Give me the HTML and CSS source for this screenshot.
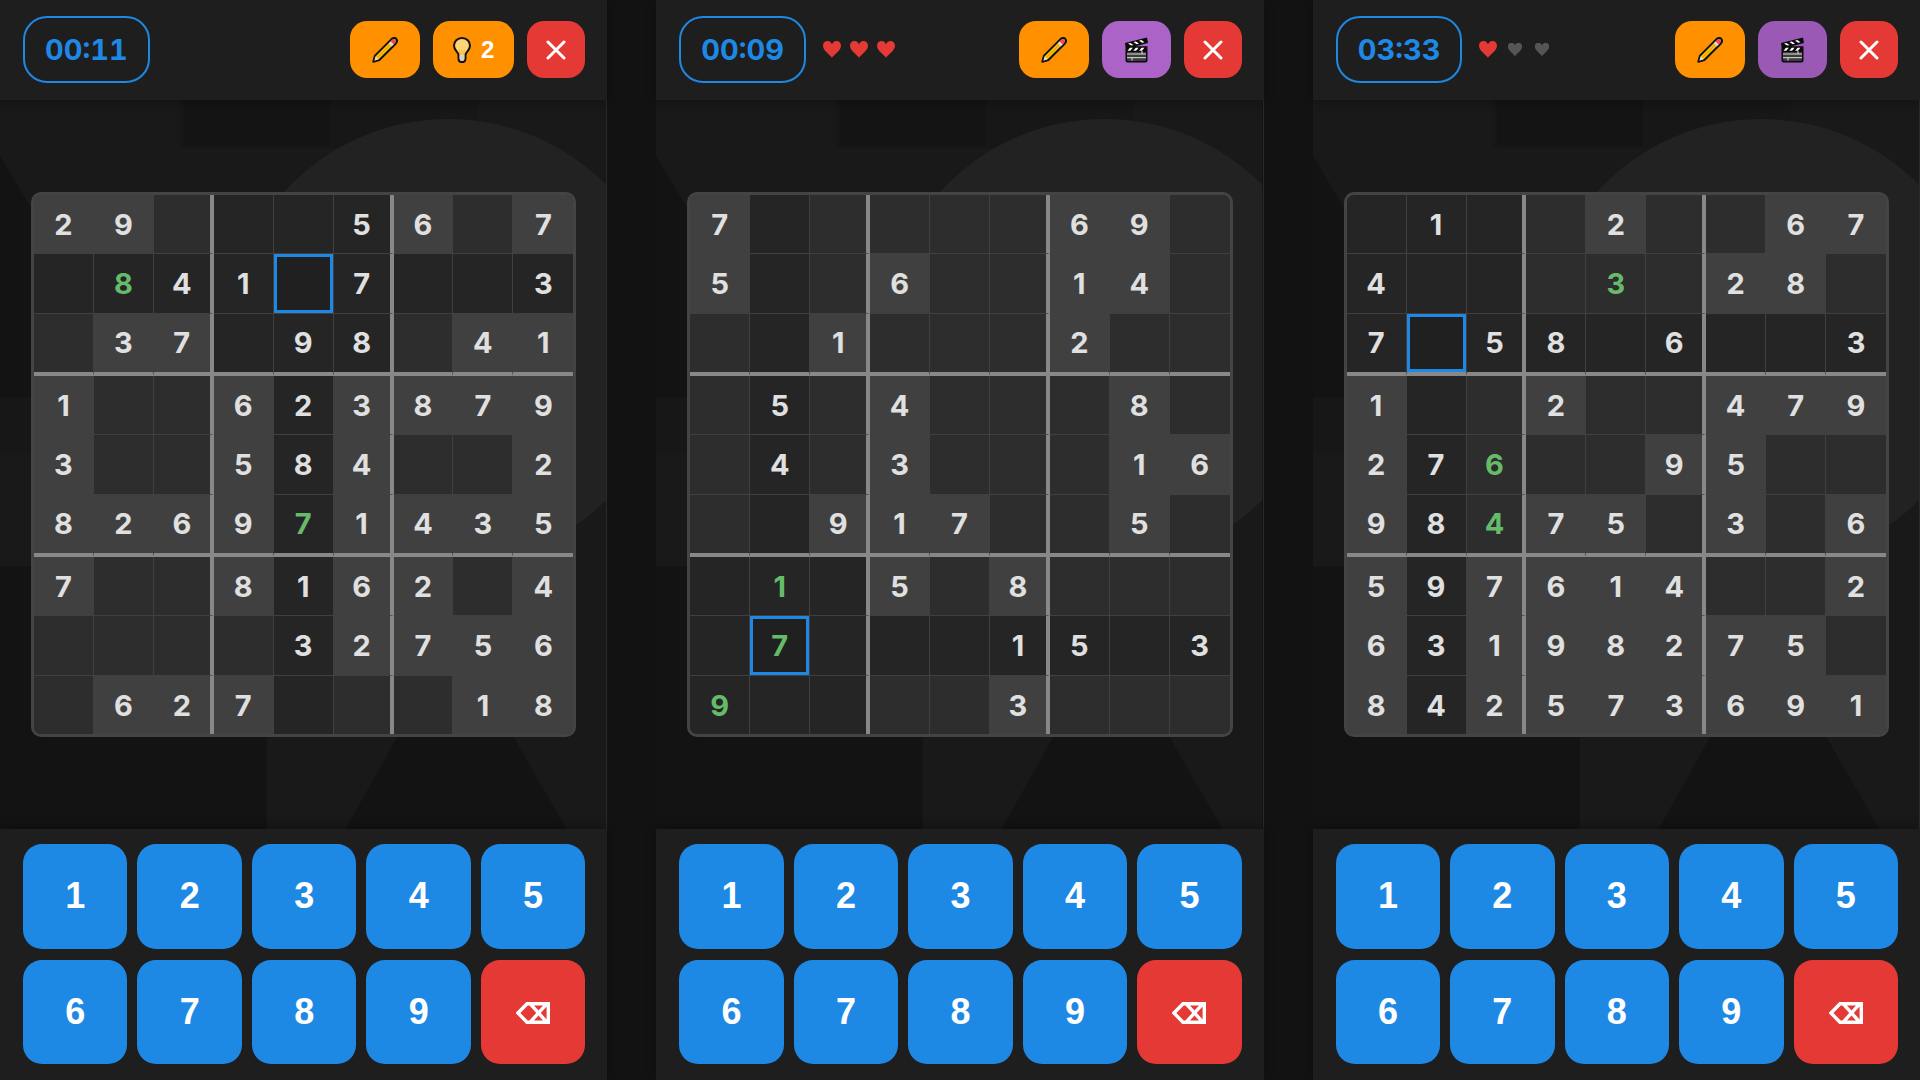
FILE: index.html
```html
<!DOCTYPE html>
<html lang="en">
<head>
    <meta charset="UTF-8">
    <meta name="viewport" content="width=device-width, initial-scale=1.0">
    <title>Sudoku</title>
    <link rel="stylesheet" href="styles.css">
</head>
<body>
    <!-- shared shapes -->
    <svg class="sprite" aria-hidden="true">
        <symbol id="pencil" viewBox="0 0 26 26">
            <path d="M1.3 24.7 L3 18.6 L19 2.6 Q22 -0.2 24.2 1.8 Q26.2 4 23.4 7 L7.4 23 Z" fill="#f9bf00" stroke="#111" stroke-width="2" stroke-linejoin="round"/>
            <path d="M18.6 4.4 L20 3 Q22.2 1.3 23.4 2.6 Q24.7 3.8 23 6 L21.6 7.4 Z" fill="#f0495c"/>
            <path d="M16.6 6.4 L18.6 4.4 L21.6 7.4 L19.6 9.4 Z" fill="#d8d8d8"/>
            <path d="M5.4 20.6 L18.1 7.9" stroke="#e89a00" stroke-width="1"/>
            <path d="M2.3 23.7 L3.7 19.3 L6.7 22.3 Z" fill="#e8d6c8"/>
        </symbol>
        <symbol id="bulb" viewBox="0 0 18 26">
            <path d="M9 1 C4.3 1 1 4.4 1 8.8 C1 12.5 4.2 14.3 5.4 17 L5.6 22.5 Q6 25 9 25 Q12 25 12.4 22.5 L12.6 17 C13.8 14.3 17 12.5 17 8.8 C17 4.4 13.7 1 9 1 Z" fill="#ffd571" stroke="#111" stroke-width="2"/>
            <path d="M6.6 18.5 H11.4 L11.2 22.5 Q10.8 24 9 24 Q7.2 24 6.8 22.5 Z" fill="#cfd3d8"/>
            <path d="M6.5 13 L7.5 17.5 M9 13 V17.5 M11.5 13 L10.5 17.5" stroke="#f5b52c" stroke-width="1" fill="none"/>
        </symbol>
        <symbol id="clapper" viewBox="0 0 24 26">
            <path d="M0.5 6 L22.5 0.5 L23.5 6 L11 9.2 H23 V23.5 Q23 25.5 21 25.5 H3 Q1 25.5 1 23.5 V9.5 Z" fill="#0b0b0b"/>
            <path d="M2.5 15 H21.5 V22.5 Q21.5 24 20 24 H4 Q2.5 24 2.5 22.5 Z" fill="#3c3c3c"/>
            <path d="M3.5 6.5 L5.8 5.9 L9 8 L6.7 8.6 Z M9 5.1 L11.3 4.5 L14.5 6.6 L12.2 7.2 Z M14.5 3.7 L16.8 3.1 L20 5.2 L17.7 5.8 Z M5.5 10.7 H8.3 L5.8 13.8 H3 Z M11.3 10.7 H14.1 L11.6 13.8 H8.8 Z M17.1 10.7 H19.9 L17.4 13.8 H14.6 Z" fill="#fff"/>
            <path d="M2.5 17 H21.5 M2.5 20.7 H21.5 M17.5 14 V17 M7.5 20.7 V23.5" stroke="#e0e0e0" stroke-width="1"/>
        </symbol>
        <symbol id="cross" viewBox="0 0 20 20">
            <path d="M2 2 L18 18 M18 2 L2 18" stroke="#fff" stroke-width="3" stroke-linecap="round"/>
        </symbol>
        <symbol id="heart" viewBox="0 0 18 17">
            <path d="M9 17 C8 14.3 0 10 0 4.8 C0 1.8 2 0 4.6 0 C6.8 0 8.4 1.3 9 3.4 C9.6 1.3 11.2 0 13.4 0 C16 0 18 1.8 18 4.8 C18 10 10 14.3 9 17 Z" fill="currentColor"/>
        </symbol>
        <symbol id="erase" viewBox="0 0 34 22">
            <path d="M11 1.7 H32.3 V20.3 H11 L2 11 Z M14 1.7 L31 20.3 M31 1.7 L14 20.3" fill="none" stroke="#fff" stroke-width="3.4"/>
        </symbol>
        <symbol id="backdrop" viewBox="0 0 607 728" preserveAspectRatio="none">
            <rect width="607" height="728" fill="#191919"/>
            <path d="M0 56 L90 206 V728 H0 Z" fill="#131313"/>
            <rect x="0" y="297" width="218" height="54" fill="#171717"/>
            <rect x="0" y="351" width="218" height="115" fill="#191919"/>
            <rect x="180" y="0" width="298" height="48" fill="#171717"/>
            <rect x="184" y="0" width="146" height="46" fill="#141414"/>
            <rect x="0" y="466" width="267" height="262" fill="#131313"/>
            <circle cx="449" cy="242" r="223" fill="#222"/>
            <path d="M455 534 L346 728 H567 Z" fill="#131313"/>
        </symbol>
    </svg>

    <main class="screens">
        <section class="game" data-time="00:11" data-hints="2" data-selected="1,4"
            data-given="29...56.7 ..41.7..3 .37.98.41 1..623879 3..584..2 8269.1435 7..8162.4 ....32756 .627...18"
            data-placed="1,1,8 5,4,7"></section>
        <section class="game" data-time="00:09" data-lives="3" data-selected="7,1" data-ad="bright"
            data-given="7.....69. 5..6..14. ..1...2.. .5.4...8. .4.3...16 ..917..5. ...5.8... .....15.3 .....3..."
            data-placed="6,1,1 7,1,7 8,0,9"></section>
        <section class="game" data-time="03:33" data-lives="1" data-selected="2,1"
            data-given=".1..2..67 4.....28. 7.58.6..3 1..2..479 27...95.. 98.75.3.6 597614..2 63198275. 842573691"
            data-placed="1,4,3 4,2,6 5,2,4"></section>
    </main>

    <script src="script.js"></script>
</body>
</html>
```

FILE: styles.css
```css
* {
    box-sizing: border-box;
}

body {
    margin: 0;
    background-color: #121212;
    color: #e0e0e0;
    font-family: Inter, sans-serif;
}

button {
    border: none;
    padding: 0;
    color: #fff;
    font-family: "Liberation Sans", Arial, sans-serif;
    font-weight: bold;
    cursor: pointer;
}

.sprite {
    display: none;
}

.screens {
    display: grid;
    grid-template-columns: repeat(3, 1fr);
    gap: 49px;
    min-height: 100vh;
}

.game {
    display: flex;
    flex-direction: column;
    min-width: 0;
}

/* top bar */
.topbar {
    display: flex;
    align-items: center;
    padding: 16px 22px 17px 23px;
    background-color: #1e1e1e;
    box-shadow: 0 2px 10px rgba(0, 0, 0, 0.3);
    z-index: 1;
}

.timer {
    padding: 0 20px;
    border: 2px solid #1e88e5;
    border-radius: 24px;
    color: #1e88e5;
    font-size: 29px;
    font-weight: 700;
    line-height: 63px;
    font-variant-numeric: tabular-nums;
}

.lives {
    display: flex;
    gap: 9px;
    margin-left: 17px;
    color: #e53935;
}

.lives svg {
    width: 18px;
    height: 17px;
}

.lives .lost {
    color: #555;
    transform: scale(0.8);
}

.actions {
    display: flex;
    gap: 13px;
    margin-left: auto;
}

.actions button {
    display: flex;
    align-items: center;
    justify-content: center;
    gap: 10px;
    height: 57px;
    padding: 0 22px;
    border-radius: 17px;
    background-color: #ff9100;
    font-size: 24px;
}

.actions svg {
    width: 26px;
    height: 26px;
}

.actions .hint {
    padding: 0 20px;
}

.actions .hint svg {
    width: 18px;
}

.actions .ad {
    background-color: #9b59b6;
}

.actions .ad svg {
    width: 25px;
}

.actions .ad.bright {
    background-color: #ab63c8;
}

.actions .close {
    padding: 0 19px;
    background-color: #e53935;
}

.actions .close svg {
    width: 20px;
    height: 20px;
}

/* board */
.table-area {
    position: relative;
    flex: 1;
    display: flex;
    align-items: center;
    justify-content: center;
    padding: 0 30px 0 31px;
    border-right: 1px solid #2a2a2a;
}

.backdrop {
    position: absolute;
    inset: 0;
    width: 100%;
    height: 100%;
}

.board {
    position: relative;
    display: grid;
    grid-template-columns: repeat(9, 1fr);
    width: 100%;
    aspect-ratio: 1;
    border: 3px solid #444;
    border-radius: 10px;
    background-color: #2d2d2d;
    overflow: hidden;
}

.board button {
    min-width: 0;
    border: 0 solid #404040;
    border-width: 0 1px 1px 0;
    border-radius: 0;
    background-color: #2d2d2d;
    color: #e0e0e0;
    font-family: Inter, sans-serif;
    font-size: 29px;
    font-weight: 700;
    line-height: 1;
}

.board .given {
    background-color: #404040;
}

.board .placed {
    color: #66bb6a;
}

.board .near {
    background-color: #252525;
}

.board .box-right {
    border-right: 4px solid #888;
}

.board .box-bottom {
    border-bottom: 4px solid #888;
}

.board .last-col {
    border-right-width: 0;
}

.board .last-row {
    border-bottom-width: 0;
}

.board .selected {
    background-color: #202020;
    box-shadow: inset 0 0 0 3px #1e88e5;
}

/* number keys */
.keypad {
    display: grid;
    grid-template-columns: repeat(5, 1fr);
    gap: 11px 10px;
    padding: 15px 22px 16px 23px;
    background-color: #1e1e1e;
    box-shadow: 0 -2px 10px rgba(0, 0, 0, 0.3);
    z-index: 1;
}

.keypad button {
    aspect-ratio: 1;
    border-radius: 19px;
    background-color: #1e88e5;
    font-size: 36px;
}

.keypad .erase {
    background-color: #e53935;
}

.keypad svg {
    width: 34px;
    height: 22px;
}
```

FILE: script.js
```js
function icon(name, cls) {
    return `<svg class="${cls || ""}" aria-hidden="true"><use href="#${name}"/></svg>`;
}

function topbar(data) {
    let lives = "";
    if (data.lives) {
        for (let i = 0; i < 3; i++) {
            lives += icon("heart", i < data.lives ? "" : "lost");
        }
        lives = `<div class="lives">${lives}</div>`;
    }
    const help = data.hints
        ? `<button class="hint" aria-label="Hints left: ${data.hints}">${icon("bulb")}${data.hints}</button>`
        : `<button class="ad ${data.ad || ""}" aria-label="Watch a clip">${icon("clapper")}</button>`;

    return `<header class="topbar">
        <div class="timer">${data.time}</div>${lives}
        <div class="actions">
            <button aria-label="Notes">${icon("pencil")}</button>
            ${help}
            <button class="close" aria-label="Close">${icon("cross")}</button>
        </div>
    </header>`;
}

function board(data) {
    const rows = data.given.split(" ");
    const placed = {};
    data.placed.split(" ").forEach(item => {
        const [r, c, n] = item.split(",");
        placed[r + "," + c] = n;
    });
    const [sr, sc] = data.selected.split(",").map(Number);
    const box = (r, c) => Math.floor(r / 3) * 3 + Math.floor(c / 3);

    let cells = "";
    for (let r = 0; r < 9; r++) {
        for (let c = 0; c < 9; c++) {
            const own = placed[r + "," + c];
            const value = own || rows[r][c].replace(".", "");
            const cls = [];
            if (own) cls.push("placed");
            else if (value) cls.push("given");
            if (r === sr || c === sc || box(r, c) === box(sr, sc)) cls.push("near");
            if (c === 2 || c === 5) cls.push("box-right");
            if (r === 2 || r === 5) cls.push("box-bottom");
            if (c === 8) cls.push("last-col");
            if (r === 8) cls.push("last-row");
            if (r === sr && c === sc) cls.push("selected");
            cells += `<button class="${cls.join(" ")}" aria-label="Row ${r + 1}, column ${c + 1}">${value}</button>`;
        }
    }
    return `<div class="table-area">${icon("backdrop", "backdrop")}<div class="board">${cells}</div></div>`;
}

function keypad() {
    let keys = "";
    for (let n = 1; n <= 9; n++) {
        keys += `<button>${n}</button>`;
    }
    return `<div class="keypad">${keys}<button class="erase" aria-label="Erase">${icon("erase")}</button></div>`;
}

document.querySelectorAll(".game").forEach(game => {
    game.innerHTML = topbar(game.dataset) + board(game.dataset) + keypad();
});
```
